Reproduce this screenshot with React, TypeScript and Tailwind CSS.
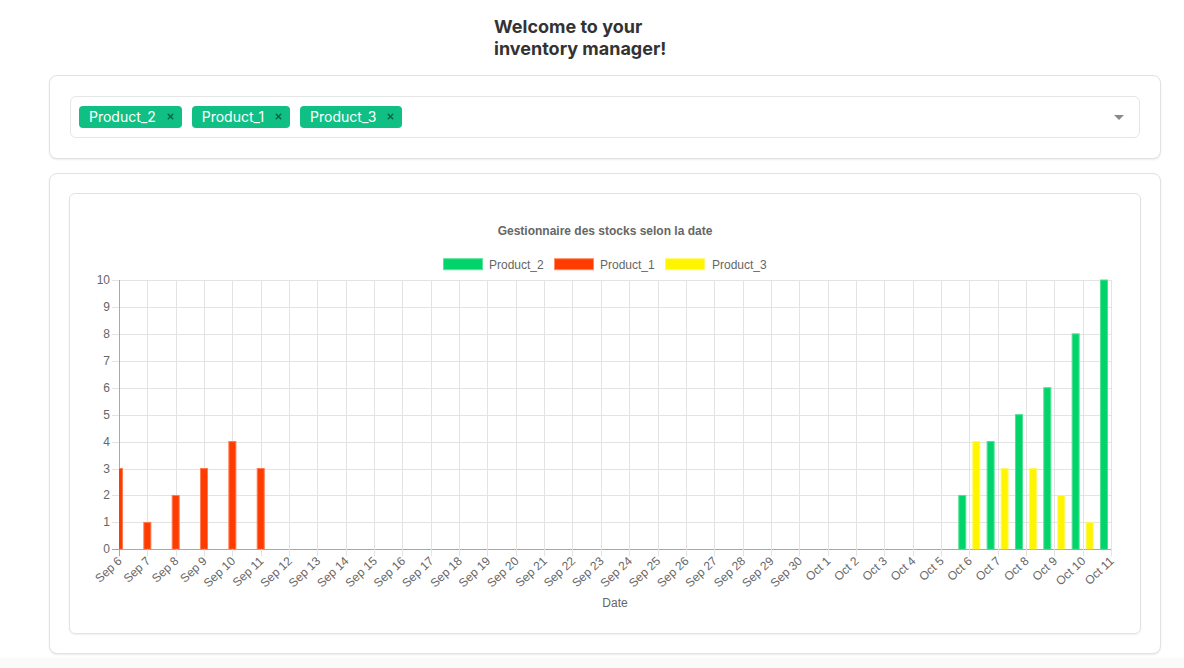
import { X } from "lucide-react";

interface Bar {
  day: number;
  value: number;
}

const dates: string[] = [];
for (let d = 6; d <= 30; d++) dates.push(`Sep ${d}`);
for (let d = 1; d <= 11; d++) dates.push(`Oct ${d}`);

const product1: Bar[] = [
  { day: 0, value: 3 },
  { day: 1, value: 1 },
  { day: 2, value: 2 },
  { day: 3, value: 3 },
  { day: 4, value: 4 },
  { day: 5, value: 3 },
];
const product2: Bar[] = [
  { day: 30, value: 2 },
  { day: 31, value: 4 },
  { day: 32, value: 5 },
  { day: 33, value: 6 },
  { day: 34, value: 8 },
  { day: 35, value: 10 },
];
const product3: Bar[] = [
  { day: 30, value: 4 },
  { day: 31, value: 3 },
  { day: 32, value: 3 },
  { day: 33, value: 2 },
  { day: 34, value: 1 },
];

const selected = ["Product_2", "Product_1", "Product_3"];

// chart geometry (px inside the svg)
const left = 49;
const right = 1041;
const top = 86;
const bottom = 355.3;
const step = (right - left) / (dates.length - 1);
const unit = (bottom - top) / 10;
const tickX = (i: number) => left + i * step;
const valueY = (v: number) => bottom - v * unit;

const Chart = () => {
  const font = "'Liberation Sans', Arial, sans-serif";

  const renderBars = (bars: Bar[], offset: number, fill: string, stroke: string) =>
    bars.map((b) => {
      const cx = tickX(b.day) + offset;
      const y = valueY(b.value);
      return (
        <rect
          key={`${fill}-${b.day}`}
          x={cx - 3.5}
          y={y}
          width={7}
          height={bottom - y}
          fill={fill}
          stroke={stroke}
          strokeWidth={1}
        />
      );
    });

  return (
    <svg width={1070} height={439} className="block">
      <defs>
        <clipPath id="plot">
          <rect x={left} y={top - 1} width={right - left} height={bottom - top + 1} />
        </clipPath>
      </defs>

      <text
        x={535}
        y={36.5}
        textAnchor="middle"
        dominantBaseline="central"
        fontFamily={font}
        fontSize={12}
        fontWeight="bold"
        fill="#666"
      >
        Gestionnaire des stocks selon la date
      </text>

      {/* legend */}
      <rect x={373.5} y={64.7} width={39} height={11} fill="#00d46b" stroke="#5be39a" />
      <text x={419} y={70.5} dominantBaseline="central" fontFamily={font} fontSize={12} fill="#666">
        Product_2
      </text>
      <rect x={484.5} y={64.7} width={39} height={11} fill="#ff3c00" stroke="#ff8a66" />
      <text x={530} y={70.5} dominantBaseline="central" fontFamily={font} fontSize={12} fill="#666">
        Product_1
      </text>
      <rect x={595.5} y={64.7} width={39} height={11} fill="#fff500" stroke="#fff866" />
      <text x={642} y={70.5} dominantBaseline="central" fontFamily={font} fontSize={12} fill="#666">
        Product_3
      </text>

      {/* horizontal grid + y labels */}
      {Array.from({ length: 11 }, (_, v) => (
        <g key={`y${v}`}>
          <line
            x1={42}
            x2={right}
            y1={Math.round(valueY(v)) + 0.5}
            y2={Math.round(valueY(v)) + 0.5}
            stroke={v === 0 ? "#a8a8a8" : "#e3e3e3"}
          />
          <text
            x={40}
            y={valueY(v)}
            textAnchor="end"
            dominantBaseline="central"
            fontFamily={font}
            fontSize={12}
            fill="#666"
          >
            {v}
          </text>
        </g>
      ))}

      {/* vertical grid + x labels */}
      {dates.map((d, i) => {
        const x = Math.round(tickX(i)) + 0.5;
        return (
          <g key={d}>
            <line
              x1={x}
              x2={x}
              y1={top}
              y2={bottom + 7}
              stroke={i === 0 ? "#a8a8a8" : "#e3e3e3"}
            />
            <text
              x={tickX(i) + 1}
              y={365}
              textAnchor="end"
              dominantBaseline="central"
              fontFamily={font}
              fontSize={12}
              fill="#666"
              transform={`rotate(-43 ${tickX(i) + 1} 365)`}
            >
              {d}
            </text>
          </g>
        );
      })}

      <g clipPath="url(#plot)">
        {renderBars(product1, 0, "#ff3c00", "#ff7a52")}
        {renderBars(product2, -7, "#00d46b", "#4fe093")}
        {renderBars(product3, 7, "#fff500", "#fff766")}
      </g>

      <text
        x={545}
        y={408.5}
        textAnchor="middle"
        dominantBaseline="central"
        fontFamily={font}
        fontSize={12}
        fill="#666"
      >
        Date
      </text>
    </svg>
  );
};

const App = () => {
  return (
    <div className="min-h-screen bg-[#fafafa]" style={{ fontFamily: "Inter, 'Noto Sans', sans-serif" }}>
      <div className="bg-white pb-1">
        <h1 className="w-[196px] mx-auto pt-4 text-lg leading-[22px] font-bold text-[#333]">
          Welcome to your inventory manager!
        </h1>

        <div className="ml-[49px] mr-[23px] mt-[15px] p-5 bg-white border border-[#e2e2e2] rounded-lg shadow-[0_1px_2px_rgba(0,0,0,0.08)]">
          <div className="flex items-center h-[42px] pl-2 pr-[15px] border border-[#e6e6e6] rounded-md">
            <div className="flex flex-1 gap-2.5 -mt-px">
              {selected.map((p) => (
                <span
                  key={p}
                  className="flex items-center h-[22px] pl-2.5 pr-[7px] gap-2.5 rounded bg-[#10bf84] text-white text-sm"
                >
                  {p}
                  <X size={9} strokeWidth={4} className="text-[#0b6446]" />
                </span>
              ))}
            </div>
            <div className="w-0 h-0 border-l-[5px] border-r-[5px] border-t-[5px] border-l-transparent border-r-transparent border-t-[#8a8a8a]" />
          </div>
        </div>

        <div className="ml-[49px] mr-[23px] mt-[14px] p-[19px] bg-white border border-[#e2e2e2] rounded-lg shadow-[0_1px_2px_rgba(0,0,0,0.08)]">
          <div className="border border-[#e2e2e2] rounded-md shadow-[0_1px_2px_rgba(0,0,0,0.06)]">
            <Chart />
          </div>
        </div>
      </div>
    </div>
  );
};

export default App;
